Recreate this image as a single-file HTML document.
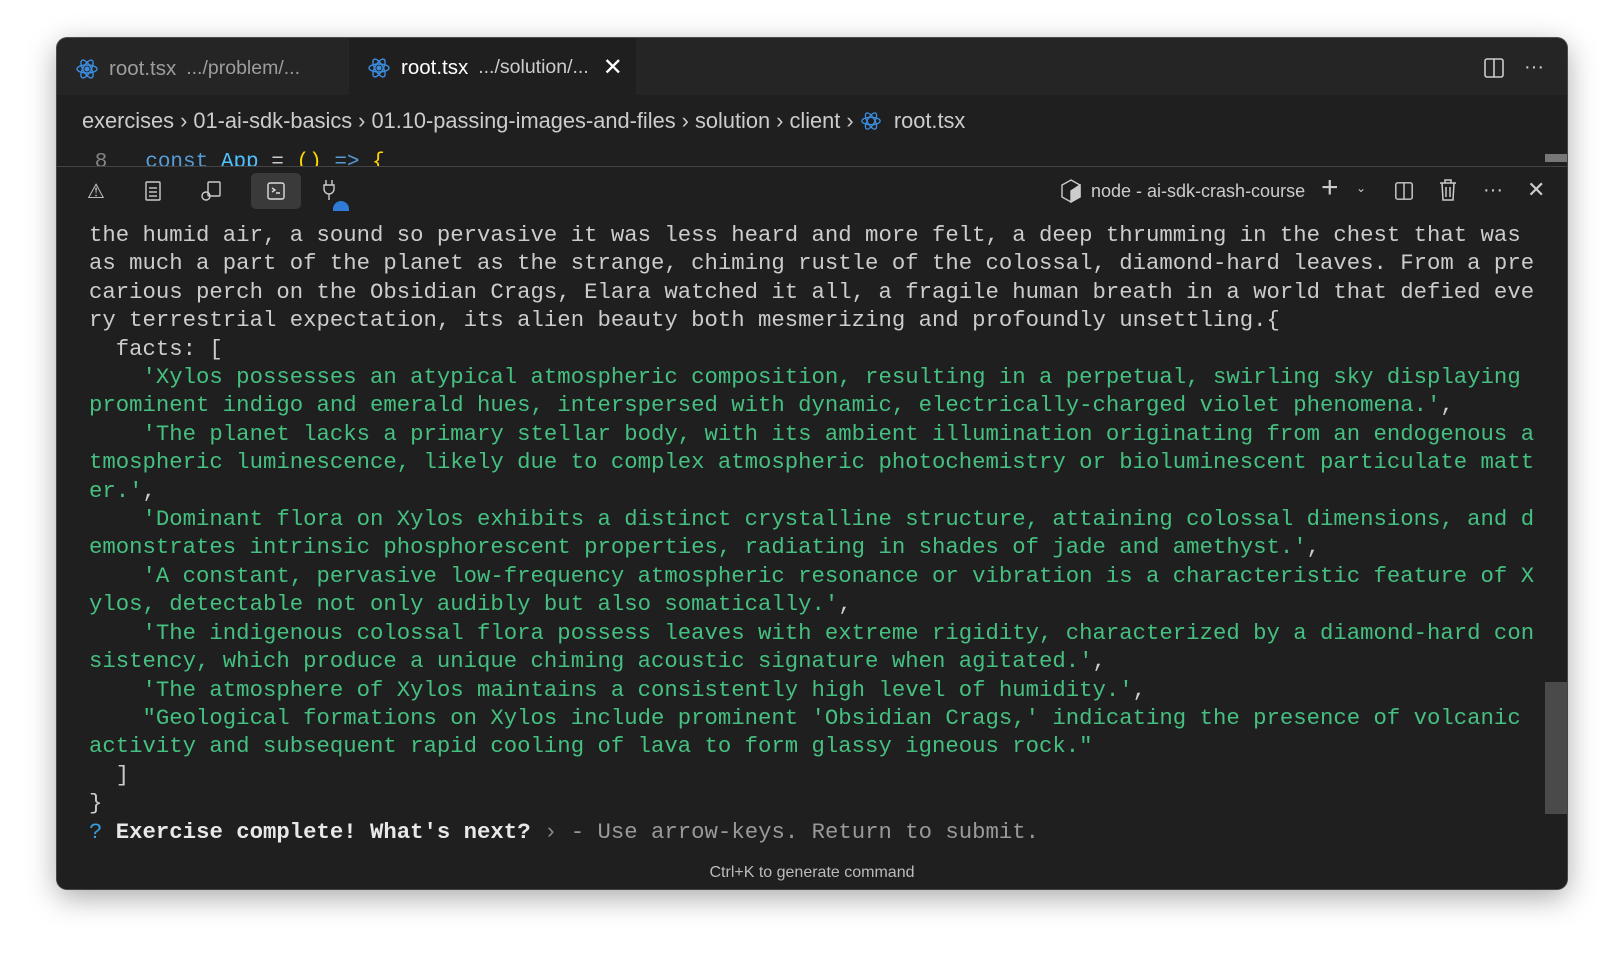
<!DOCTYPE html>
<html><head><meta charset="utf-8"><style>
*{margin:0;padding:0;box-sizing:border-box}
body{width:1624px;height:964px;background:#fff;position:relative;overflow:hidden;font-family:"Liberation Sans",sans-serif}
.win{position:absolute;left:57px;top:38px;width:1510px;height:851px;background:#1f1f1f;border-radius:10px;overflow:hidden;box-shadow:0 8px 30px rgba(0,0,0,.35),0 0 0 1px #555}
.tabs{position:absolute;left:0;top:0;width:100%;height:57px;background:#252526}
.tab{position:absolute;top:2px;height:57px;display:flex;align-items:center;font-size:20.5px;color:#9d9d9d}
.tab .n{margin-left:10px}
.tab .p{margin-left:10px;font-size:19.5px}
.t2{left:292px;width:287px;background:#1f1f1f;color:#fff;top:0;height:57px;padding-top:2px}
.t2 .p{color:#ccc}
.crumb{position:absolute;left:25px;top:70px;font-size:21.8px;color:#cccccc;white-space:pre}
.code{position:absolute;left:0;top:103px;height:25px;width:100%;overflow:hidden;font-family:"Liberation Mono",monospace;font-size:21px;white-space:pre;padding-top:10px}
.panel{position:absolute;left:0;top:128px;width:100%;bottom:0;border-top:1px solid #444;background:#1f1f1f}
.term{position:absolute;left:32px;top:54px;font-family:"Liberation Mono",monospace;font-size:22.3px;line-height:28.4px;color:#cccccc;white-space:pre}
.g{color:#45c080}
.foot{position:absolute;left:0;width:100%;top:697px;text-align:center;font-size:16px;color:#bbb}
.sb{position:absolute;right:0;top:515px;width:22px;height:132px;background:#4a4a4a}
.ic{position:absolute;color:#ccc}
</style></head><body>
<div class="win">
 <div class="tabs">
  <div class="tab" style="left:18px"><svg width="24" height="24" viewBox="0 0 24 24" fill="none" stroke="#3b8ee0" stroke-width="1.4"><ellipse cx="12" cy="12" rx="10" ry="4"/><ellipse cx="12" cy="12" rx="10" ry="4" transform="rotate(60 12 12)"/><ellipse cx="12" cy="12" rx="10" ry="4" transform="rotate(120 12 12)"/><circle cx="12" cy="12" r="1.8" fill="#3b8ee0"/></svg><span class="n">root.tsx</span><span class="p">.../problem/...</span></div>
  <div class="tab t2"><svg style="margin-left:18px" width="24" height="24" viewBox="0 0 24 24" fill="none" stroke="#3b8ee0" stroke-width="1.4"><ellipse cx="12" cy="12" rx="10" ry="4"/><ellipse cx="12" cy="12" rx="10" ry="4" transform="rotate(60 12 12)"/><ellipse cx="12" cy="12" rx="10" ry="4" transform="rotate(120 12 12)"/><circle cx="12" cy="12" r="1.8" fill="#3b8ee0"/></svg><span class="n">root.tsx</span><span class="p">.../solution/...</span><span style="margin-left:14px;font-size:24px;color:#fff">✕</span></div>
  <svg class="ic" style="left:1426px;top:19px" width="22" height="22" viewBox="0 0 22 22" fill="none" stroke="#ccc" stroke-width="1.6"><rect x="2" y="2" width="18" height="18" rx="2"/><line x1="11" y1="2" x2="11" y2="20"/></svg>
  <div class="ic" style="left:1467px;top:18px;font-size:20px">···</div>
 </div>
 <div class="crumb">exercises › 01-ai-sdk-basics › 01.10-passing-images-and-files › solution › client › <svg style="vertical-align:-4px" width="22" height="22" viewBox="0 0 24 24" fill="none" stroke="#3b8ee0" stroke-width="1.4"><ellipse cx="12" cy="12" rx="10" ry="4"/><ellipse cx="12" cy="12" rx="10" ry="4" transform="rotate(60 12 12)"/><ellipse cx="12" cy="12" rx="10" ry="4" transform="rotate(120 12 12)"/></svg>  root.tsx</div>
 <div class="code"><span style="color:#858585">   8   </span><span style="color:#569cd6">const</span> <span style="color:#4fc1ff">App</span> <span style="color:#ccc">=</span> <span style="color:#ffd700">()</span> <span style="color:#569cd6">=&gt;</span> <span style="color:#ffd700">{</span></div>
 <div style="position:absolute;right:0;top:116px;width:22px;height:8px;background:#777"></div>
 <div class="panel">
  <div class="ic" style="left:30px;top:12px;font-size:20px">⚠</div>
  <svg class="ic" style="left:88px;top:14px" width="16" height="20" viewBox="0 0 16 20" fill="none" stroke="#ccc" stroke-width="1.4"><rect x="1" y="1" width="14" height="18" rx="1"/><line x1="4" y1="7" x2="12" y2="7"/><line x1="4" y1="11" x2="12" y2="11"/><line x1="4" y1="15" x2="12" y2="15"/></svg>
  <svg class="ic" style="left:143px;top:13px" width="22" height="22" viewBox="0 0 22 22" fill="none" stroke="#ccc" stroke-width="1.4"><rect x="8" y="2" width="12" height="14" rx="1"/><circle cx="6" cy="16" r="4"/></svg>
  <div style="position:absolute;left:194px;top:6px;width:50px;height:36px;background:#3a3a3a;border-radius:5px"></div>
  <svg class="ic" style="left:210px;top:15px" width="18" height="18" viewBox="0 0 18 18" fill="none" stroke="#ddd" stroke-width="1.4"><rect x="1" y="1" width="16" height="16" rx="2"/><path d="M5 6l3 2-3 2M9 11h4"/></svg>
  <svg class="ic" style="left:264px;top:12px" width="16" height="22" viewBox="0 0 16 22" fill="none" stroke="#ccc" stroke-width="1.4"><path d="M5 1v5M11 1v5M3 6h10v4a5 5 0 0 1-10 0zM8 15v6"/></svg>
  <div style="position:absolute;left:276px;top:34px;width:16px;height:10px;border-radius:8px 8px 0 0;background:#2f7bd8"></div>
  <svg class="ic" style="left:1003px;top:12px" width="22" height="24" viewBox="0 0 22 24" fill="none" stroke="#ccc" stroke-width="1.4"><path d="M11 1l9 5v12l-9 5-9-5V6z"/><path d="M11 12l9-6v12l-9 5z" fill="#ccc"/></svg>
  <div class="ic" style="left:1034px;top:14px;font-size:18px">node - ai-sdk-crash-course</div>
  <div class="ic" style="left:1264px;top:4px;font-size:30px;font-weight:300">+</div>
  <div class="ic" style="left:1299px;top:14px;font-size:12px">⌄</div>
  <svg class="ic" style="left:1337px;top:14px" width="20" height="20" viewBox="0 0 22 22" fill="none" stroke="#ccc" stroke-width="1.6"><rect x="2" y="2" width="18" height="18" rx="2"/><line x1="11" y1="2" x2="11" y2="20"/></svg>
  <svg class="ic" style="left:1382px;top:12px" width="18" height="22" viewBox="0 0 18 22" fill="none" stroke="#ccc" stroke-width="1.5"><path d="M1 4h16M6 4V1h6v3M3 4l1 17h10l1-17M7 8v10M11 8v10"/></svg>
  <div class="ic" style="left:1426px;top:12px;font-size:20px">···</div>
  <div class="ic" style="left:1470px;top:10px;font-size:22px">✕</div>
  <div class="term">the humid air, a sound so pervasive it was less heard and more felt, a deep thrumming in the chest that was
as much a part of the planet as the strange, chiming rustle of the colossal, diamond-hard leaves. From a pre
carious perch on the Obsidian Crags, Elara watched it all, a fragile human breath in a world that defied eve
ry terrestrial expectation, its alien beauty both mesmerizing and profoundly unsettling.{
  facts: [
<span class="g">    'Xylos possesses an atypical atmospheric composition, resulting in a perpetual, swirling sky displaying
prominent indigo and emerald hues, interspersed with dynamic, electrically-charged violet phenomena.'</span>,
<span class="g">    'The planet lacks a primary stellar body, with its ambient illumination originating from an endogenous a
tmospheric luminescence, likely due to complex atmospheric photochemistry or bioluminescent particulate matt
er.'</span>,
<span class="g">    'Dominant flora on Xylos exhibits a distinct crystalline structure, attaining colossal dimensions, and d
emonstrates intrinsic phosphorescent properties, radiating in shades of jade and amethyst.'</span>,
<span class="g">    'A constant, pervasive low-frequency atmospheric resonance or vibration is a characteristic feature of X
ylos, detectable not only audibly but also somatically.'</span>,
<span class="g">    'The indigenous colossal flora possess leaves with extreme rigidity, characterized by a diamond-hard con
sistency, which produce a unique chiming acoustic signature when agitated.'</span>,
<span class="g">    'The atmosphere of Xylos maintains a consistently high level of humidity.'</span>,
<span class="g">    "Geological formations on Xylos include prominent 'Obsidian Crags,' indicating the presence of volcanic
activity and subsequent rapid cooling of lava to form glassy igneous rock."</span>
  ]
}
<span style="color:#3b9ee0">?</span> <b style="color:#e8e8e8">Exercise complete! What's next?</b> <span style="color:#888">›</span> <span style="color:#999">- Use arrow-keys. Return to submit.</span></div>
  <div class="foot">Ctrl+K to generate command</div>
  <div class="sb"></div>
 </div>
</div>
</body></html>
